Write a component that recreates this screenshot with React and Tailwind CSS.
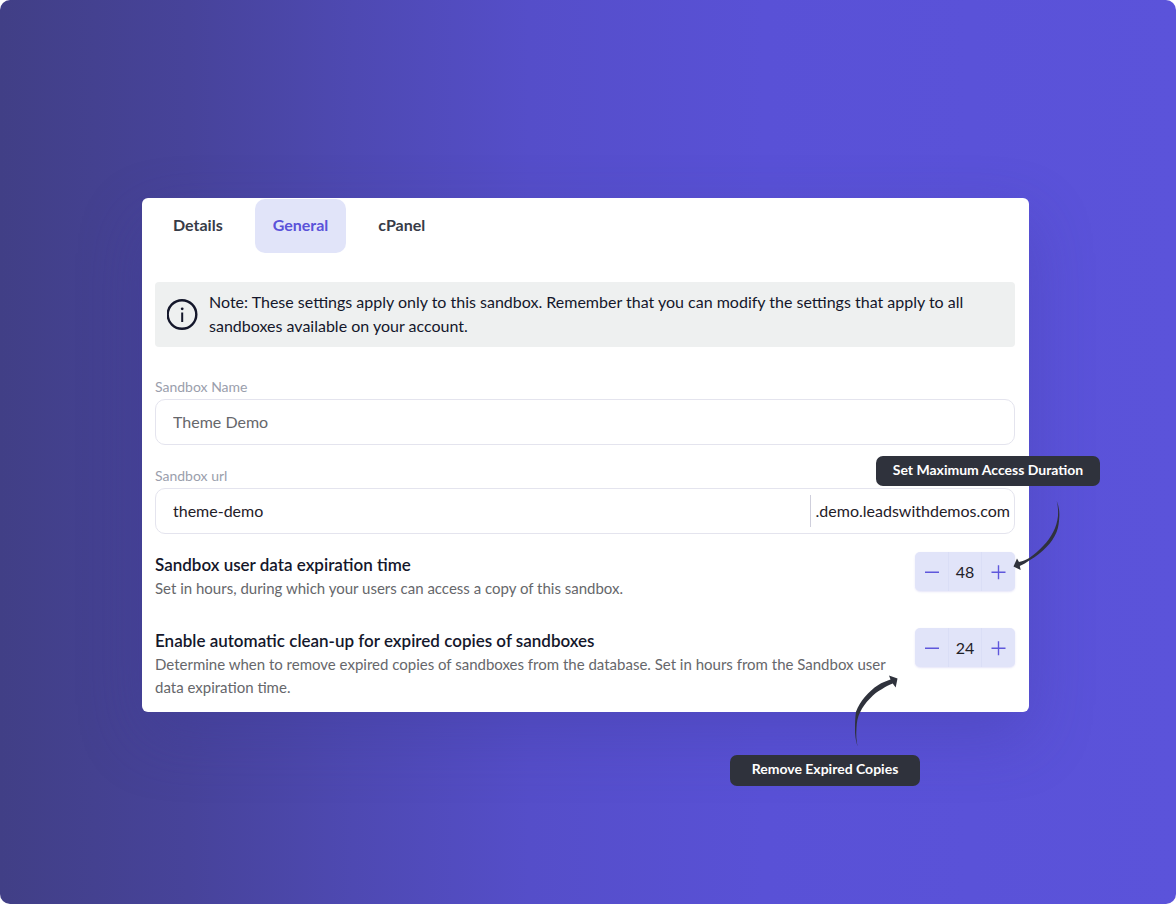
import React, { useState } from 'react';

const tabs = ['Details', 'General', 'cPanel'];

function Tabs({ active, onChange }) {
  return (
    <nav className="flex gap-[14px] pt-px">
      {tabs.map((tab) => (
        <button
          key={tab}
          type="button"
          onClick={() => onChange(tab)}
          className={`h-[54px] rounded-[10px] px-[18px] pb-[2px] text-base font-bold ${
            active === tab ? 'bg-[#e1e4f9] text-[#5a52d9]' : 'text-[#373b47]'
          }`}
        >
          {tab}
        </button>
      ))}
    </nav>
  );
}

function Note({ children }) {
  return (
    <div className="mt-[29px] flex items-center gap-[10px] rounded-[4px] bg-[#eef0f0] pt-2 pr-10 pb-[9px] pl-3">
      <svg className="h-8 w-8 shrink-0" viewBox="0 0 32 32" fill="none">
        <circle cx="15" cy="16.5" r="14.3" stroke="#14172b" strokeWidth="2.4" />
        <circle cx="15.2" cy="10.8" r="1.4" fill="#14172b" />
        <path d="M15.2 14.5V24" stroke="#14172b" strokeWidth="2" />
      </svg>
      <p className="text-base leading-6 text-[#14172b]">{children}</p>
    </div>
  );
}

function Stepper({ id, value, onChange }) {
  return (
    <div className="flex h-[39px] w-[100px] shrink-0 overflow-hidden rounded-[5px] bg-[#e1e4f9] shadow-[0_1px_2px_rgba(90,82,217,0.15)]">
      <button
        type="button"
        aria-label="Decrease"
        onClick={() => onChange(value - 1)}
        className="flex w-[34px] items-center justify-center border-r border-[#dadef6]"
      >
        <svg className="h-4 w-4" viewBox="0 0 16 16" stroke="#5f57dc" strokeWidth="1.6">
          <path d="M1 8.3H15" />
        </svg>
      </button>
      <input
        id={id}
        type="text"
        inputMode="numeric"
        value={value}
        onChange={(e) => onChange(Number(e.target.value) || 0)}
        className="w-8 min-w-0 bg-transparent text-center text-base text-[#1f2028] outline-none"
      />
      <button
        type="button"
        aria-label="Increase"
        onClick={() => onChange(value + 1)}
        className="flex w-[34px] items-center justify-center border-l border-[#dadef6]"
      >
        <svg className="h-4 w-4" viewBox="0 0 16 16" stroke="#5f57dc" strokeWidth="1.4">
          <path d="M0.5 8.3H14.5M7.5 1.3V15.3" />
        </svg>
      </button>
    </div>
  );
}

function Setting({ id, title, text, value, onChange }) {
  return (
    <div className="flex items-start justify-between gap-6">
      <div>
        <label htmlFor={id} className="block text-[17px] leading-[25px] font-semibold text-[#14172b]">
          {title}
        </label>
        <p className="text-[15px] leading-[23px] text-[#66676b]">{text}</p>
      </div>
      <Stepper id={id} value={value} onChange={onChange} />
    </div>
  );
}

function Callout({ className, children }) {
  return (
    <div className={`absolute flex justify-center rounded-[7px] bg-[#2f323c] text-sm leading-[27px] font-bold whitespace-nowrap text-white ${className}`}>
      {children}
    </div>
  );
}

function App() {
  const [tab, setTab] = useState('General');
  const [name, setName] = useState('Theme Demo');
  const [url, setUrl] = useState('theme-demo');
  const [expiration, setExpiration] = useState(48);
  const [cleanup, setCleanup] = useState(24);

  return (
    <div className="bg-white font-[Lato,sans-serif]">
      <div className="min-h-screen rounded-[10px] bg-[linear-gradient(90deg,#413f86_0%,#47439a_16%,#4e49b2_30%,#554ec9_45%,#5951d6_65%,#5b53da_100%)] pt-[198px] pr-[147px] pb-16 pl-[142px]">
        <main className="relative rounded-[6px] bg-white pr-[14px] pb-[13px] pl-[13px] shadow-[0_24px_64px_rgba(60,55,150,0.3)]">
          <Tabs active={tab} onChange={setTab} />

          <Note>
            Note: These settings apply only to this sandbox. Remember that you can modify the settings that apply to all
            sandboxes available on your account.
          </Note>

          <div className="mt-7">
            <label htmlFor="name" className="block text-sm leading-6 text-[#9a9eac]">
              Sandbox Name
            </label>
            <input
              id="name"
              type="text"
              value={name}
              onChange={(e) => setName(e.target.value)}
              className="block h-[46px] w-full rounded-[10px] border border-[#e4e4ee] px-[17px] pb-[2px] text-base text-[#66676b] outline-none"
            />
          </div>

          <div className="mt-[19px]">
            <label htmlFor="url" className="block text-sm leading-6 text-[#9a9eac]">
              Sandbox url
            </label>
            <div className="flex h-[46px] items-center rounded-[10px] border border-[#e4e4ee] pr-1">
              <input
                id="url"
                type="text"
                value={url}
                onChange={(e) => setUrl(e.target.value)}
                className="min-w-0 flex-1 px-[17px] text-base text-[#1f2028] outline-none"
              />
              <span className="border-l border-[#cfcfdc] pl-[5px] text-base leading-8 text-[#1f2028]">
                .demo.leadswithdemos.com
              </span>
            </div>
          </div>

          <div className="mt-[18px] flex flex-col gap-7">
            <Setting
              id="expiration"
              title="Sandbox user data expiration time"
              text="Set in hours, during which your users can access a copy of this sandbox."
              value={expiration}
              onChange={setExpiration}
            />
            <Setting
              id="cleanup"
              title="Enable automatic clean-up for expired copies of sandboxes"
              text="Determine when to remove expired copies of sandboxes from the database. Set in hours from the Sandbox user data expiration time."
              value={cleanup}
              onChange={setCleanup}
            />
          </div>

          {/* Callouts */}
          <Callout className="top-[258px] -right-[71px] h-[30px] w-56">Set Maximum Access Duration</Callout>
          <svg className="absolute top-[300px] -right-8 h-[74px] w-12" viewBox="0 0 48 74" fill="#2f323c">
            <path d="M43.7 3C45.8 8 46.6 13 46.3 18.7C46 24 45.5 29 43.7 33.7C41.5 39 38 44.5 33.7 48.7C29 54 23 58.5 17 62C13.5 64.5 10 66.5 6.8 68L7.7 72L0.5 68.5L4 60.5L6 64C10 63 13.5 61.5 17 59.5C22 56 26 52 30.3 47.7C34.5 43.5 38 38.5 40.3 33.7C42.8 29 44.2 24 44.9 18.7C45.4 13 45 8 43.7 3Z" />
          </svg>
          <Callout className="top-[557px] right-[109px] h-[31px] w-[190px]">Remove Expired Copies</Callout>
          <svg className="absolute top-[476px] right-[131px] h-[74px] w-11" viewBox="0 0 44 74" fill="#2f323c">
            <path d="M3.7 72.7C1.6 67 0.8 60 1 54C1 48 1.2 43 2 37.7C4 32 7 27.5 11 22.7C15 18.5 19 14 24.3 11C28 8.5 32 7 36.5 5.5L35 1.5L43.5 4.5L41.7 13.5L38.7 9.5C34.5 11 31.5 13 27.7 15.2C23.5 17.5 20 20 16 24.5C12 28.5 8.5 33 6 38.5C3.5 43 2.8 48 2.5 54C2 60 2.3 67 3.7 72.7Z" />
          </svg>
        </main>
      </div>
    </div>
  );
}

export default App;
